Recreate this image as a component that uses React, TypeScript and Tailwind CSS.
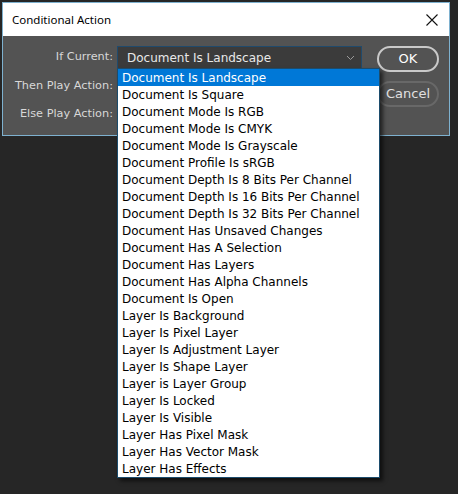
import React from "react";

const items = [
  "Document Is Landscape",
  "Document Is Square",
  "Document Mode Is RGB",
  "Document Mode Is CMYK",
  "Document Mode Is Grayscale",
  "Document Profile Is sRGB",
  "Document Depth Is 8 Bits Per Channel",
  "Document Depth Is 16 Bits Per Channel",
  "Document Depth Is 32 Bits Per Channel",
  "Document Has Unsaved Changes",
  "Document Has A Selection",
  "Document Has Layers",
  "Document Has Alpha Channels",
  "Document Is Open",
  "Layer Is Background",
  "Layer Is Pixel Layer",
  "Layer Is Adjustment Layer",
  "Layer Is Shape Layer",
  "Layer is Layer Group",
  "Layer Is Locked",
  "Layer Is Visible",
  "Layer Has Pixel Mask",
  "Layer Has Vector Mask",
  "Layer Has Effects",
];

const uiFont = { fontFamily: '"DejaVu Sans", "Liberation Sans", sans-serif' };

export default function App() {
  return (
    <div className="w-[458px] h-[494px] bg-[#262626] p-[2px] relative overflow-hidden" style={uiFont}>
      <div className="w-[448px] border border-[#7eb1cf] bg-[#535353]">
        {/* title bar */}
        <div className="h-[33px] bg-white flex items-center justify-between pl-[9px] pr-[8px]">
          <span
            className="text-[11.5px] text-black"
            style={{ fontFamily: '"Noto Sans", "Open Sans", sans-serif' }}
          >
            Conditional Action
          </span>
          <svg width="16" height="16" viewBox="0 0 16 16" className="mr-[1px]">
            <path d="M2.5 2.5 L13.5 13.5 M13.5 2.5 L2.5 13.5" stroke="#111" strokeWidth="1.1" />
          </svg>
        </div>
        {/* body */}
        <div className="h-[99px] flex pt-[10px]">
          <div className="flex flex-col items-end w-[110px] text-[11.3px] text-[#d8d8d8] leading-none">
            <div className="h-[22px] flex items-center">If Current:</div>
            <div className="h-[28px] mt-[4px] flex items-center">Then Play Action:</div>
            <div className="h-[28px] flex items-center">Else Play Action:</div>
          </div>
          <div className="ml-[4px] w-[245px]">
            <div className="h-[23px] bg-[#3b3b3b] border border-[#204a6c] flex items-center justify-between pl-[9px] pr-[6px] text-[12px] text-[#e8e8e8]">
              <span>Document Is Landscape</span>
              <svg width="9" height="6" viewBox="0 0 9 6">
                <path d="M1 1 L4.5 4.5 L8 1" stroke="#9a9a9a" strokeWidth="1" fill="none" />
              </svg>
            </div>
          </div>
          <div className="ml-[15px] flex flex-col gap-[9px]">
            <button className="w-[62px] h-[26px] rounded-full border-2 border-[#c9c9c9] text-[13px] text-white flex items-center justify-center">
              OK
            </button>
            <button className="w-[62px] h-[26px] rounded-full border-2 border-[#686868] text-[13px] text-[#e0e0e0] flex items-center justify-center">
              Cancel
            </button>
          </div>
        </div>
      </div>
      {/* dropdown list overlay */}
      <div className="absolute left-[117px] top-[68px] w-[263px] bg-white border border-[#1c4c6c] shadow-[3px_3px_4px_rgba(0,0,0,0.6)]">
        {items.map((it, i) => (
          <div
            key={it}
            className={
              "h-[17px] pl-[4px] pt-[1px] text-[12px] leading-[17px] whitespace-nowrap " +
              (i === 0 ? "bg-[#0078d7] text-white" : "text-black")
            }
          >
            {it}
          </div>
        ))}
      </div>
    </div>
  );
}
